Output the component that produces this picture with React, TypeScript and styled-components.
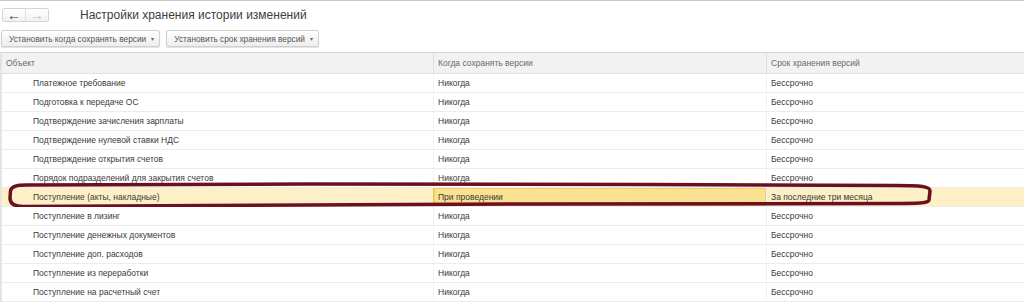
import * as React from 'react';
import styled, { createGlobalStyle } from 'styled-components';

const GlobalStyle = createGlobalStyle`
  html, body {
    margin: 0;
    padding: 0;
    background: #fff;
    font-family: "Liberation Sans", Arial, sans-serif;
  }
`;

interface Item {
  name: string;
  when: string;
  term: string;
  selected?: boolean;
}

const items: Item[] = [
  { name: 'Платежное требование', when: 'Никогда', term: 'Бессрочно' },
  { name: 'Подготовка к передаче ОС', when: 'Никогда', term: 'Бессрочно' },
  { name: 'Подтверждение зачисления зарплаты', when: 'Никогда', term: 'Бессрочно' },
  { name: 'Подтверждение нулевой ставки НДС', when: 'Никогда', term: 'Бессрочно' },
  { name: 'Подтверждение открытия счетов', when: 'Никогда', term: 'Бессрочно' },
  { name: 'Порядок подразделений для закрытия счетов', when: 'Никогда', term: 'Бессрочно' },
  { name: 'Поступление (акты, накладные)', when: 'При проведении', term: 'За последние три месяца', selected: true },
  { name: 'Поступление в лизинг', when: 'Никогда', term: 'Бессрочно' },
  { name: 'Поступление денежных документов', when: 'Никогда', term: 'Бессрочно' },
  { name: 'Поступление доп. расходов', when: 'Никогда', term: 'Бессрочно' },
  { name: 'Поступление из переработки', when: 'Никогда', term: 'Бессрочно' },
  { name: 'Поступление на расчетный счет', when: 'Никогда', term: 'Бессрочно' },
];

export default function App() {
  return (
    <Page>
      <GlobalStyle />
      <TitleBar>
        <NavGroup>
          <NavButton $active>&#8592;</NavButton>
          <NavButton>&#8594;</NavButton>
        </NavGroup>
        <Title>Настройки хранения истории изменений</Title>
      </TitleBar>
      <Toolbar>
        <MenuButton>Установить когда сохранять версии <Caret>▾</Caret></MenuButton>
        <MenuButton>Установить срок хранения версий <Caret>▾</Caret></MenuButton>
      </Toolbar>
      <Table>
        <HeadRow>
          <HeadCell>Объект</HeadCell>
          <HeadCell>Когда сохранять версии</HeadCell>
          <HeadCell>Срок хранения версий</HeadCell>
        </HeadRow>
        {items.map((item, i) => (
          <Row key={'row' + i} $selected={item.selected}>
            <NameCell>{item.name}</NameCell>
            <Cell $current={item.selected}>{item.when}</Cell>
            <Cell>{item.term}</Cell>
            {item.selected && (
              // hand drawn marker round the selected row
              <Mark viewBox="0 0 928 30" preserveAspectRatio="none">
                <path
                  d="M 20 3 L 300 2 L 640 2.5 L 887 3.5 C 915 3.5, 923 4.5, 923 9 L 922 18 C 921 21.5, 912 21.5, 882 21.5 L 520 22 L 200 23.5 L 16 24.5 C 7 24.5, 3 21, 3 16 L 3.5 9 C 4 4.5, 9 3, 20 3 Z"
                  fill="none"
                  stroke="#6a1020"
                  strokeWidth="3.5"
                  strokeLinejoin="round"
                />
              </Mark>
            )}
          </Row>
        ))}
      </Table>
    </Page>
  );
}

const Page = styled.div`
  width: 1024px;
  height: 302px;
  overflow: hidden;
  border-top: 1px solid #c8c8c8;
  box-sizing: border-box;
`;

const TitleBar = styled.div`
  display: flex;
  align-items: center;
  height: 27px;
  padding-left: 2px;
`;

const NavGroup = styled.div`
  display: flex;
  border: 1px solid #d4d4d4;
  border-radius: 2px;
  background: linear-gradient(#ffffff, #f1f1f1);
  height: 12px;
`;

const NavButton = styled.div<{ $active?: boolean }>`
  width: 22px;
  display: flex;
  align-items: center;
  justify-content: center;
  font-size: 14px;
  font-weight: bold;
  line-height: 12px;
  color: ${p => (p.$active ? '#444' : '#c4c4c4')};
  & + & {
    border-left: 1px solid #e0e0e0;
  }
`;

const Title = styled.div`
  margin-left: 31px;
  font-size: 12px;
  color: #3c3c3c;
`;

const Toolbar = styled.div`
  display: flex;
  gap: 6px;
  padding: 2px 0 0 1px;
  height: 22px;
`;

const MenuButton = styled.div`
  display: flex;
  align-items: center;
  height: 15px;
  padding: 0 5px 0 7px;
  border: 1px solid #cfcfcf;
  border-radius: 2px;
  background: linear-gradient(#ffffff, #ededed);
  box-shadow: 0 1px 1px rgba(0, 0, 0, 0.12);
  font-size: 8.3px;
  color: #555;
  white-space: nowrap;
`;

const Caret = styled.span`
  margin-left: 5px;
  font-size: 6px;
  color: #666;
`;

const Table = styled.div`
  border-top: 1px solid #d6d6d6;
  border-left: 2px solid #e4e4e4;
`;

const HeadRow = styled.div`
  display: grid;
  grid-template-columns: 431px 333px 1fr;
  height: 20px;
  background: #f2f2f2;
  border-bottom: 1px solid #e0e0e0;
`;

const HeadCell = styled.div`
  display: flex;
  align-items: center;
  padding-left: 4px;
  font-size: 8.5px;
  color: #6a6a6a;
  & + & {
    border-left: 1px solid #e0e0e0;
  }
`;

const Row = styled.div<{ $selected?: boolean }>`
  position: relative;
  display: grid;
  grid-template-columns: 431px 333px 1fr;
  height: 18px;
  border-bottom: 1px solid #ececec;
  background: ${p => (p.$selected ? '#fdf0c6' : '#fff')};
`;

const Cell = styled.div<{ $current?: boolean }>`
  display: flex;
  align-items: center;
  padding-left: 4px;
  font-size: 8.5px;
  color: #3a3a3a;
  white-space: nowrap;
  border-left: 1px solid ${p => (p.$current ? '#f0c454' : '#f2f2f2')};
  background: ${p => (p.$current ? '#fbe192' : 'transparent')};
  ${p => (p.$current ? 'box-shadow: inset 0 0 0 1px #f3cc66;' : '')}
`;

const NameCell = styled(Cell)`
  padding-left: 31px;
  border-left: none;
`;

const Mark = styled.svg`
  position: absolute;
  left: 5px;
  top: -6px;
  width: 928px;
  height: 30px;
  pointer-events: none;
  overflow: visible;
`;
